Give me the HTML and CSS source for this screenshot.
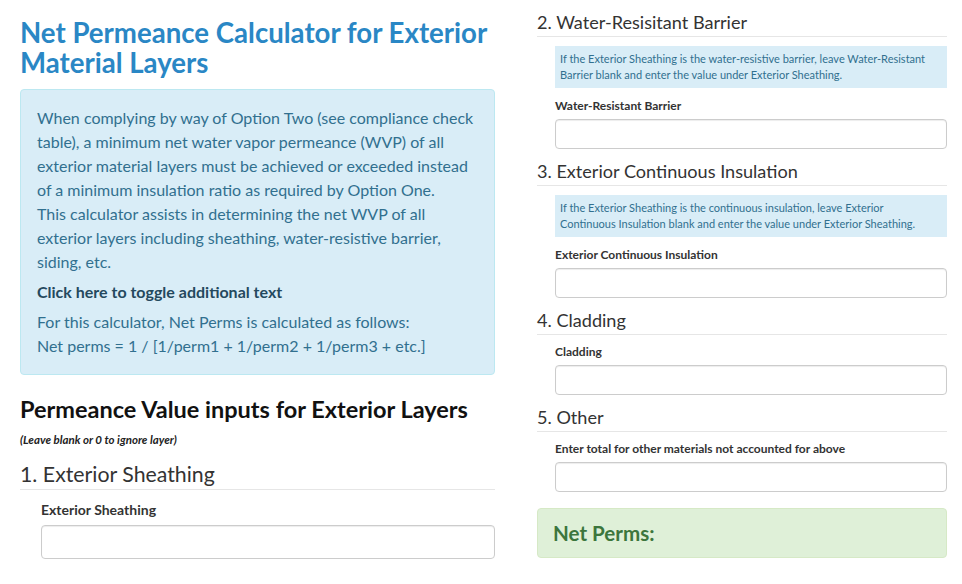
FILE: index.html
```html
<!DOCTYPE html>
<html lang="en">
<head>
    <meta charset="utf-8">
    <title>Net Permeance Calculator</title>
    <link rel="stylesheet" href="styles.css">
</head>
<body>
    <div id="page">
        <div class="col col-left">
            <h1 class="page-title">Net Permeance Calculator for Exterior Material Layers</h1>
            <div class="alert alert-info">
                <p>When complying by way of Option Two (see compliance check table), a minimum net water vapor permeance (WVP) of all exterior material layers must be achieved or exceeded instead of a minimum insulation ratio as required by Option One.<br>This calculator assists in determining the net WVP of all exterior layers including sheathing, water-resistive barrier, siding, etc.</p>
                <p class="toggle">Click here to toggle additional text</p>
                <p>For this calculator, Net Perms is calculated as follows:<br>Net perms = 1 / [1/perm1 + 1/perm2 + 1/perm3 + etc.]</p>
            </div>
            <h2 class="inputs-title">Permeance Value inputs for Exterior Layers</h2>
            <div class="note">(Leave blank or 0 to ignore layer)</div>
            <h3 class="layer-title">1. Exterior Sheathing</h3>
            <div class="field">
                <label>Exterior Sheathing</label>
                <input type="text">
            </div>
        </div>

        <div class="col col-right">
            <h3 class="layer-title">2. Water-Resisitant Barrier</h3>
            <div class="field">
                <div class="hint">If the Exterior Sheathing is the water-resistive barrier, leave Water-Resistant Barrier blank and enter the value under Exterior Sheathing.</div>
                <label>Water-Resistant Barrier</label>
                <input type="text">
            </div>

            <h3 class="layer-title">3. Exterior Continuous Insulation</h3>
            <div class="field">
                <div class="hint">If the Exterior Sheathing is the continuous insulation, leave Exterior Continuous Insulation blank and enter the value under Exterior Sheathing.</div>
                <label>Exterior Continuous Insulation</label>
                <input type="text">
            </div>

            <h3 class="layer-title">4. Cladding</h3>
            <div class="field">
                <label>Cladding</label>
                <input type="text">
            </div>

            <h3 class="layer-title">5. Other</h3>
            <div class="field">
                <label>Enter total for other materials not accounted for above</label>
                <input type="text">
            </div>

            <div class="alert-success">Net Perms:</div>
        </div>
    </div>
</body>
</html>
```

FILE: styles.css
```css
body {
    margin: 0;
    padding: 0;
    background-color: #fff;
    color: #333;
    font-family: Lato, 'Open Sans', sans-serif;
}

#page {
    display: grid;
    grid-template-columns: 475px 410px;
    column-gap: 42px;
    padding: 0 15px 0 20px;
}

h1, h2, h3, p {
    margin: 0;
}

/* left column */

.page-title {
    margin: 18px 0 11px;
    font-size: 27.6px;
    line-height: 30px;
    font-weight: 700;
    color: #2a87c5;
}

.alert-info {
    background-color: #d9edf7;
    border: 1px solid #bce8f1;
    border-radius: 4px;
    color: #31708f;
    padding: 16px 16px 16px 16px;
    font-size: 16px;
    line-height: 24px;
}

.alert-info p {
    margin-bottom: 6px;
}

.alert-info p:last-child {
    margin-bottom: 0;
}

.alert-info .toggle {
    font-weight: 700;
    color: #24495e;
}

.inputs-title {
    margin-top: 21px;
    font-size: 23.5px;
    line-height: 26px;
    font-weight: 700;
    color: #111;
}

.note {
    margin-top: 11px;
    font-size: 11.5px;
    line-height: 14px;
    font-style: italic;
    font-weight: 700;
    color: #222;
}

.col-left .layer-title {
    margin-top: 13px;
    font-size: 21.3px;
    line-height: 28px;
    padding-bottom: 1px;
}

.col-left .field {
    padding: 10px 0 0 21px;
}

.col-left label {
    font-size: 14px;
    line-height: 20px;
    margin-bottom: 5px;
}

.col-left input {
    height: 34px;
}

/* shared */

.layer-title {
    font-weight: 400;
    color: #333;
    border-bottom: 1px solid #e6e6e6;
}

label {
    display: block;
    font-weight: 700;
    color: #333;
}

input {
    display: block;
    box-sizing: border-box;
    width: 100%;
    margin: 0;
    border: 1px solid #ccc;
    border-radius: 4px;
    box-shadow: inset 0 1px 1px rgba(0, 0, 0, 0.075);
    background: #fff;
}

/* right column */

.col-right .layer-title {
    margin-top: 11px;
    font-size: 18.1px;
    line-height: 23px;
    padding-bottom: 2px;
}

.col-right .field {
    padding: 9px 0 0 18px;
}

.col-right label {
    font-size: 12px;
    line-height: 16px;
    margin-bottom: 5px;
}

.col-right input {
    height: 30px;
}

.hint {
    background-color: #d9edf7;
    color: #31708f;
    font-size: 11px;
    line-height: 16px;
    padding: 5px 18px 5px 5px;
    margin-bottom: 10px;
}

.alert-success {
    margin-top: 16px;
    height: 50px;
    box-sizing: border-box;
    padding: 0 15px;
    display: flex;
    align-items: center;
    background-color: #dff0d8;
    border: 1px solid #d6e9c6;
    border-radius: 4px;
    color: #3c763d;
    font-size: 20.6px;
    font-weight: 700;
}
```
